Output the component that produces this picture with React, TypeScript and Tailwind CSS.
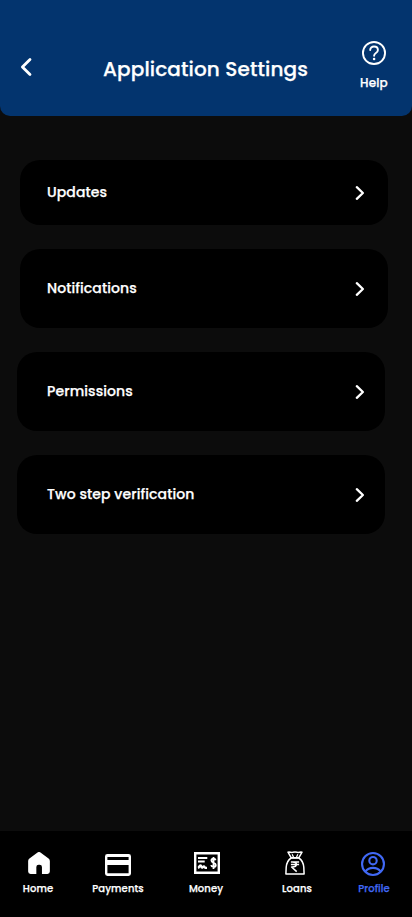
import React from "react";

const BackIcon = () => (
  <svg width="12" height="20" viewBox="0 0 12 20" fill="none" stroke="white" strokeWidth="2.8" strokeLinecap="round" strokeLinejoin="round">
    <path d="M10 2.400 2.400 10 10 17.600" />
  </svg>
);

const ChevronIcon = () => (
  <svg width="10" height="16" viewBox="0 0 10 16" fill="none" stroke="white" strokeWidth="2.300" strokeLinecap="round" strokeLinejoin="round">
    <path d="M1.800 2.200 7.900 8 1.800 13.800" />
  </svg>
);

const HelpIcon = () => (
  <svg width="24" height="24" viewBox="0 0 24 24" fill="none" stroke="white" strokeWidth="1.900" strokeLinecap="round" strokeLinejoin="round">
    <circle cx="12" cy="12" r="11.050" />
    <path d="M8.200 9.100C8.200 6.900 9.800 5.500 12 5.500s3.900 1.400 3.900 3.400c0 1.400-.8 2.300-2 3.100-1.200.8-1.800 1.400-1.800 2.800" />
    <circle cx="12.100" cy="18" r="1.300" fill="white" stroke="none" />
  </svg>
);

const HomeIcon = () => (
  <svg width="22" height="22" viewBox="0 0 22 22.300" fill="white">
    <path d="M9.500.5a2.500 2.500 0 0 1 3 0l8.200 6.200A3 3 0 0 1 22 9v10.800a2.500 2.500 0 0 1-2.500 2.500H14v-7.100a2.400 2.400 0 0 0-2.400-2.400h-.9a2.400 2.400 0 0 0-2.400 2.400v7.100H2.500A2.500 2.500 0 0 1 0 19.800V9a3 3 0 0 1 1.300-2.300z" />
  </svg>
);

const PaymentsIcon = () => (
  <svg width="26" height="22" viewBox="0 0 26 22">
    <path fill="white" fillRule="evenodd" d="M2.400 0h21.2A2.400 2.400 0 0 1 26 2.400v17.200a2.400 2.400 0 0 1-2.400 2.400H2.400A2.400 2.400 0 0 1 0 19.600V2.400A2.400 2.400 0 0 1 2.400 0zM2.400 3v3h21.2V3zM2.400 11v8.200h21.2V11z" />
  </svg>
);

const MoneyIcon = () => (
  <svg width="26" height="22" viewBox="0 0 26 22" fill="none" stroke="white">
    <path d="M1.200 1.200h23.6v19.6H1.200z" strokeWidth="2.400" />
    <path d="M4 6h9.300M4 9.500h6.700" strokeWidth="2.100" />
    <path d="M4 16c1.300-.4 1.200-2.600 2.500-2.600 1.100 0 .4 2.300 1.500 2.300.8 0 1-1.400 1.800-1.400.9 0 .6 1.500 1.500 1.500H13" strokeWidth="2.300" />
    <path d="M21.600 8.300c-.2-1-1-1.600-2.100-1.600-1.300 0-2.100.8-2.100 1.900 0 2.900 4.400 1.500 4.400 4.300 0 1.300-1 2-2.300 2-1.300 0-2.200-.6-2.400-1.700M19.500 4.900v12" strokeWidth="1.800" />
  </svg>
);

const LoansIcon = () => (
  <svg width="20" height="24" viewBox="0 0 20 24" fill="none" stroke="white" strokeWidth="1.500" strokeLinejoin="round">
    <path d="M6.100 6.700 3 1.200c1.800-.5 3 .5 4.700.1 1.500-.4 3.100-.4 4.600 0 1.700.4 2.900-.6 4.700-.1l-3.100 5.500z" />
    <path d="m7.200 3.200 1.300 3M12.800 3.200l-1.300 3" strokeWidth="1.200" />
    <path d="M6.100 7h7.800c3.100 1.900 4.500 5 4.900 9.300l.3 6.700H.9l.3-6.700C1.600 12 3 8.900 6.100 7z" />
    <path d="M5.900 10.900h8.200M5.900 13.500h8.200M7.200 10.900c5.700-.3 5.700 5.300-.6 5.100l5.100 4.600" strokeWidth="1.500" />
  </svg>
);

const ProfileIcon = () => (
  <svg width="24" height="24" viewBox="0 0 24 24" fill="none" stroke="#4169f5" strokeWidth="2.100">
    <circle cx="12" cy="12" r="10.950" />
    <circle cx="12" cy="8.700" r="3.700" />
    <path d="M4.300 19.600c2-2.500 4.700-3.700 7.700-3.700s5.700 1.200 7.700 3.700" />
  </svg>
);

const settings = [
  { label: "Updates", card: "h-[65px] ml-5 pl-[27px] pr-[23px]" },
  { label: "Notifications", card: "h-[79px] ml-5 pl-[27px] pr-[23px]" },
  { label: "Permissions", card: "h-[79px] ml-[17px] pl-[30px] pr-5" },
  { label: "Two step verification", card: "h-[79px] ml-[17px] pl-[30px] pr-5" },
];

const tabs = [
  { label: "Home", icon: HomeIcon, color: "text-white", inset: "pl-[2px] pt-px" },
  { label: "Payments", icon: PaymentsIcon, color: "text-white", inset: "pt-[3px]" },
  { label: "Money", icon: MoneyIcon, color: "text-white", inset: "pl-[2px] pt-px" },
  { label: "Loans", icon: LoansIcon, color: "text-white", inset: "pr-1" },
  { label: "Profile", icon: ProfileIcon, color: "text-[#4169f5]", inset: "pr-[2px] pt-px" },
];

export default function App() {
  return (
    <div className="flex h-[917px] w-[412px] flex-col overflow-hidden bg-[#0c0c0c] font-['Poppins','Inter',sans-serif] text-white [-webkit-text-stroke:0.25px]">
      <header className="grid h-[116px] shrink-0 grid-cols-[76px_260px_76px] rounded-b-[10px] bg-[#03346e]">
        <button aria-label="Back" className="flex items-start pt-[57px] pl-5">
          <BackIcon />
        </button>
        <h1 className="pt-[54px] pr-px text-center text-[20px] leading-[30px] font-medium tracking-[0.12px] whitespace-nowrap">Application Settings</h1>
        <button className="flex flex-col items-center pt-[41px]">
          <HelpIcon />
          <span className="mt-[9px] text-[12px] leading-[18px] font-medium tracking-[0.15px]">Help</span>
        </button>
      </header>
      <main className="flex flex-1 flex-col gap-6 pt-11">
        {settings.map((item) => (
          <button key={item.label} className={`flex w-[368px] shrink-0 items-center justify-between rounded-[20px] bg-black ${item.card}`}>
            <span className="pb-[2px] text-[14px] leading-5 font-medium tracking-[0.1px]">{item.label}</span>
            <ChevronIcon />
          </button>
        ))}
      </main>
      <nav className="grid h-[86px] shrink-0 grid-cols-[76px_84px_92px_90px_64px] bg-black pt-5">
        {tabs.map(({ label, icon: Icon, color, inset }) => (
          <button key={label} className={`flex flex-col items-center ${color}`}>
            <span className={`flex h-[26px] items-start justify-center ${inset}`}>
              <Icon />
            </span>
            <span className="mt-1 text-[10px] leading-[15px] font-medium tracking-[0.1px]">{label}</span>
          </button>
        ))}
      </nav>
    </div>
  );
}
